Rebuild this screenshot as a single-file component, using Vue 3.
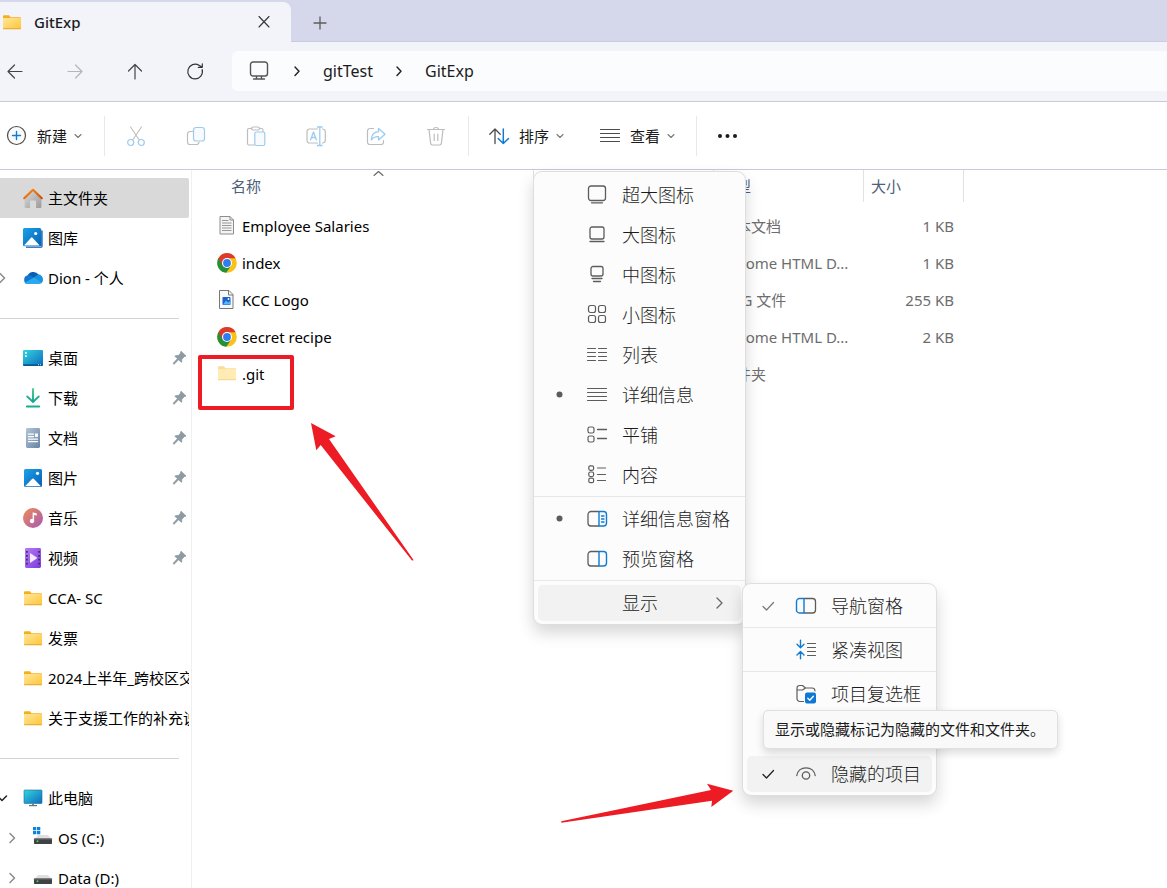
<script setup>
import { h } from 'vue'

const G = '#5c5c5c'
const B = '#0f7bd3'
const line = (d, c = G, w = 1.3) =>
  `<path d="${d}" fill="none" stroke="${c}" stroke-width="${w}" stroke-linecap="round" stroke-linejoin="round"/>`

const chrome = `<circle cx="10" cy="10" r="9.8" fill="#fbc116"/>
  <path d="M10 10 L1.5 5.1 A9.8 9.8 0 0 0 9.2 19.8 L14.2 12.5Z" fill="#23913c"/>
  <path d="M10 10 L5.6 12.4 L1.4 5.2 A9.8 9.8 0 0 1 18.6 5.2 H10Z" fill="#dc3a2b"/>
  <circle cx="10" cy="10" r="5" fill="#fff"/><circle cx="10" cy="10" r="3.9" fill="#2f7df0"/>`
const drive = `<path d="M5 7h10l3.500 4h-17z" fill="#dedfe1"/><rect x="1" y="10.500" width="18" height="5.500" rx="0.800" fill="#3f4143"/>
  <rect x="1" y="10.500" width="18" height="1" fill="#6c6e70"/><circle cx="4.500" cy="13.200" r="0.900" fill="#4be05b"/>`
const page = `M3.500 1h9.500l4 4v14h-13.500z`

const icons = {
  folder: `<path d="M1 4.200a1 1 0 0 1 1-1h5l1.500 2H18a1 1 0 0 1 1 1v3H1z" fill="#f3b01c"/><rect x="1" y="6" width="18" height="11" rx="0.800" fill="url(#g-folder)"/><rect x="1" y="16.200" width="18" height="1" rx="0.500" fill="#e5a52c"/>`,
  folderPale: `<path d="M1 3.200a1 1 0 0 1 1-1h5l1.500 2H18a1 1 0 0 1 1 1v3H1z" fill="#f9dc95"/><rect x="1" y="5" width="18" height="11" rx="0.800" fill="#ffebb3"/><rect x="1" y="15.200" width="18" height="1" fill="#f2d595"/>`,
  home: `<path d="M3 9.500 10 3l7 6.500V19a1 1 0 0 1-1 1h-3.500v-6.500a1 1 0 0 0-1-1h-3a1 1 0 0 0-1 1V20H4a1 1 0 0 1-1-1z" transform="translate(-2 0) scale(1.200 1)" fill="url(#g-home)"/><path d="M1.200 10.200 10 1.800l8.800 8.400" fill="none" stroke="url(#g-roof)" stroke-width="2.200" stroke-linecap="round" stroke-linejoin="round"/>`,
  gallery: `<path d="M18 2.500h1.800V18a2 2 0 0 1-2 2H3v-1.500h15z" fill="#3f7fbf"/><rect x="0" y="0" width="18.200" height="18.200" rx="1.500" fill="url(#g-blue)"/><path d="m1 17.500 7-7.700a1 1 0 0 1 1.500 0l7.200 7.700z" fill="#fff"/><circle cx="12.700" cy="5.500" r="1.600" fill="#fff"/>`,
  cloud: `<path d="M4.500 8.500a6 5.500 0 0 1 11-2L11 12z" fill="#0a5fb4"/><path d="M4.500 16A4.500 4.500 0 0 1 5 7.200c2.800-.2 4 1.300 9.500 5.300L7 16z" fill="#0f78d4"/><path d="M9.500 10.500 15.300 6.300A5 5 0 0 1 20 11.500c0 2-.6 3-1.700 3.700z" fill="#1793e0"/><path d="M1.500 14.800 11.200 9.600 18.800 14.800A4 4 0 0 1 16 16H4.500a4 4 0 0 1-3-1.200z" fill="#2ba9ec"/>`,
  desktop: `<rect x="0" y="2" width="20" height="15.500" rx="1" fill="url(#g-desk)"/><path d="M2 4h1.800v1.800H2zM2 7.200h1.800V9H2z" fill="#e9ffff"/><path d="M0 16.300h20v.7a1 1 0 0 1-1 1H1a1 1 0 0 1-1-1z" fill="#075a91"/><path d="M15 16.700h1M17 16.700h1" stroke="#fff" stroke-width=".8"/>`,
  download: `<path d="M10 1v12.500M4.200 8.500 10 14l5.800-5.500" fill="none" stroke="url(#g-green)" stroke-width="1.900" stroke-linecap="round"/><rect x="3" y="17.500" width="14" height="1.900" rx=".6" fill="#15b08b"/>`,
  doc: `<rect x="3" y="0" width="14" height="20" rx="1.400" fill="url(#g-doc)"/><path d="M5 6.200h6M5 8.700h6M5 11.200h10M5 13.700h10" stroke="#fff" stroke-width="1.200"/><rect x="12" y="5.500" width="3" height="3.400" fill="#fff"/>`,
  pic: `<rect x="1" y="1" width="18" height="18" rx="1.500" fill="url(#g-blue)"/><path d="m2 18.300 7.300-7.500a1 1 0 0 1 1.400 0l7.300 7.500z" fill="#fff"/><circle cx="14.500" cy="5.300" r="1.600" fill="#fff"/>`,
  music: `<circle cx="10" cy="10" r="10" fill="url(#g-music)"/><path d="M9.600 4.500h1l3.200 1v2l-2.700-.6v6.500H9.600z" fill="#fff"/><circle cx="9" cy="13" r="2.200" fill="#fff"/>`,
  video: `<rect x="2" y="0" width="16" height="20" rx="1.400" fill="url(#g-video)"/><path d="M7 5.800v8.400a.5.500 0 0 0 .8.400l6-4.200a.5.500 0 0 0 0-.8l-6-4.200a.5.500 0 0 0-.8.400z" fill="#f3eaff"/><path d="M3.900 3v15M16.100 3v15" stroke="#412a63" stroke-width="1.700" stroke-dasharray="1.800 2.100"/>`,
  pc: `<rect x="1" y="2" width="18" height="13.500" rx=".8" fill="url(#g-desk)" stroke="#1b6d9c" stroke-width=".6"/><path d="M9 15.800h2v1.700H9z" fill="#7a8791"/><rect x="6" y="17" width="8" height="1.200" fill="#66757f"/>`,
  osdrive: `${drive}<path d="M0-1h3.300v3.300H0zM4-1h3.300v3.300H4zM0 3h3.300v3.300H0zM4 3h3.300v3.300H4z" fill="#0a84d8"/>`,
  drive,
  pin: `<path d="m12.200 2.500 5.500 5.300-2 .7-2.600 3-.3 3.300L9.500 12l-4.800 4.800-1-.2.300-1.200 4.300-4.600-3-3 3.800-.5 2.700-2.600z" fill="#8f9ba3" stroke="#8f9ba3" stroke-linejoin="round"/>`,
  chromeIcon: chrome,
  textFile: `<path d="M3 .5h10L16.500 4v14H3z" fill="#f4f4f4" stroke="#8d8d8d"/><path d="M13 .5V4h3.500" fill="none" stroke="#8d8d8d"/><path d="M5 4.500h6.500M5 7h9.500M5 9.500h9.500M5 12h9.500M5 14.500h9.500" stroke="#8d8d8d" stroke-width=".9"/>`,
  imgFile: `<path d="${page}" transform="translate(-1 -.5)" fill="#f9f9f9" stroke="#777"/><path d="M11.500 .5v4.500h4.500" fill="none" stroke="#777"/><rect x="5.500" y="7" width="8" height="8" rx=".8" fill="#1b62cf"/><path d="m6 14.500 3-4 2 2 2.500-1.500v3.500z" fill="#58b8fb"/><circle cx="11.500" cy="9" r=".9" fill="#fff"/>`,
  close: line('M5 4.500 15 15M15 4.500 5 15', '#333', 1.1),
  plus: line('M4 10h12M10 4v12', '#5c5c5c', 1.3),
  back: line('M17 10.500H3M9.500 4 3 10.500 9.500 17', '#444', 1.2),
  forward: line('M3 10.500h14M10.500 4 17 10.500 10.500 17', '#b4b4ba', 1.2),
  up: line('M10 18V3.500M3.500 10 10 3.500 16.500 10', '#444', 1.2),
  refresh: line('M17.200 8.700A7.300 7.300 0 1 1 14 4.300L17.300 6.300M17.300 2.800v3.500h-4', '#333', 1.2),
  monitor: line('M4 1h12a2.500 2.500 0 0 1 2.500 2.500v9a2.500 2.500 0 0 1-2.500 2.500H4A2.500 2.500 0 0 1 1.500 12.500v-9A2.500 2.500 0 0 1 4 1zM4.500 18h11M7.500 15.300v2.500M12.500 15.300v2.500', '#555', 1.4),
  crumb: line('M8 6 12 10.300 8 14.600', '#222', 1.4),
  down: line('M7 8.500 10 11.500l3-3', '#777', 1.1),
  create: `<circle cx="9.500" cy="9.500" r="9" fill="#fafafa" stroke="#4c4c4c" stroke-width="1.200"/>` + line('M5.500 9.500h8M9.500 5.500v8', B, 1.400),
  cut: line('M4.500 1 13.300 14M15.500 1 6.700 14', '#bdbdbd', 1.1) + `<circle cx="4.700" cy="16.500" r="3" fill="none" stroke="#9ccbf0" stroke-width="1.200"/><circle cx="15.300" cy="16.500" r="3" fill="none" stroke="#9ccbf0" stroke-width="1.200"/>`,
  copy: line('M7 5.500H4A2.500 2.500 0 0 0 1.500 8v8A2.500 2.500 0 0 0 4 18.500h6.500A2.500 2.500 0 0 0 13 16', '#bdbdbd', 1.2) + `<rect x="7.500" y="1.500" width="11" height="13.500" rx="2.500" fill="#f8fbfe" stroke="#9ccbf0" stroke-width="1.200"/>`,
  paste: line('M6 2.500H3A1.500 1.500 0 0 0 1.500 4v13.500A1.500 1.500 0 0 0 3 19h5M14 2.500h1.500A1.500 1.500 0 0 1 17 4v1.500M7 1h5a1.500 1.500 0 0 1 0 3H7a1.500 1.500 0 0 1 0-3z', '#bdbdbd', 1.2) + `<rect x="8.800" y="6" width="10" height="13.500" rx="1.500" fill="#f8fbfe" stroke="#9ccbf0" stroke-width="1.200"/>`,
  rename: line('M11.500 3H3.500A2.500 2.500 0 0 0 1 5.500v9A2.500 2.500 0 0 0 3.500 17h8M16.500 3A2.800 2.800 0 0 1 19.300 6v8a2.800 2.800 0 0 1-2.800 3', '#bdbdbd', 1.2) + line('M4.500 14 7.500 6l3 8M5.500 11.500h4M13.800 1v18.500M11.500 1h4.600M11.500 19.500h4.600', '#9ccbf0', 1.3),
  share: line('M7.500 2.500H4A2.500 2.500 0 0 0 1.500 5v11A2.500 2.500 0 0 0 4 18.500h11A2.500 2.500 0 0 0 17.500 16v-1.500', '#bdbdbd', 1.2) + line('M12.500 2.500 19 8.200l-6.500 5.700v-3.200c-3.500-.2-5.500.8-7.200 3.300.2-5 3-8 7.200-8.300z', '#9ccbf0', 1.3),
  trash: line('M1.500 3.500h17M7.500 3.500a2.500 2 0 0 1 5 0M3 3.500l1.600 13.600A2 2 0 0 0 6.600 19h6.800a2 2 0 0 0 2-1.900L17 3.500M8.200 8v6.500M11.800 8v6.500', '#bdbdbd', 1.2),
  sort: line('M6 17.500V3M.8 8.200 6 3l5.200 5.200', '#4c4c4c', 1.3) + line('M14.300 3v14.500M9.200 12.500l5.100 5 5.200-5', B, 1.5),
  lines: line('M.5 3.500h19M.5 7.500h19M.5 11.500h19M.5 15.500h19', '#4c4c4c', 1.2),
  more: `<circle cx="3" cy="10" r="2" fill="#1c1c1c"/><circle cx="10.500" cy="10" r="2" fill="#1c1c1c"/><circle cx="18" cy="10" r="2" fill="#1c1c1c"/>`,
  xl: `<rect x="1.500" y="1" width="17" height="14.500" rx="2.500" fill="none" stroke="${G}" stroke-width="1.300"/>` + line('M4.500 17.800h11'),
  lg: `<rect x="3" y="2" width="14" height="12" rx="2" fill="none" stroke="${G}" stroke-width="1.300"/>` + line('M3 16.500h14'),
  md: `<rect x="4" y="1.500" width="12" height="9.500" rx="2" fill="none" stroke="${G}" stroke-width="1.300"/>` + line('M5 13.500h10M6.500 16.500h7'),
  sm: [[1.5, .5], [11.5, .5], [1.5, 10.500], [11.5, 10.500]].map(([x, y]) => `<rect x="${x}" y="${y}" width="7" height="7" rx="2" fill="none" stroke="${G}" stroke-width="1.200"/>`).join(''),
  list: line('M.5 3.500h8M11.500 3.500h8M.5 7.500h8M11.500 7.500h8M.5 11.500h8M11.500 11.500h8M.5 15.500h8M11.500 15.500h8', G, 1.200),
  details: line('M.5 3.500h19M.5 7.500h19M.5 11.500h19M.5 15.500h19', G, 1.200),
  tiles: `<rect x="1" y="2" width="6" height="6" rx="1.800" fill="none" stroke="${G}" stroke-width="1.200"/><rect x="1" y="11" width="6" height="6" rx="1.800" fill="none" stroke="${G}" stroke-width="1.200"/>` + line('M10.500 4.500h9M10.500 13.500h9'),
  content: [.8, 7, 13.200].map(y => `<rect x="1.800" y="${y}" width="4.800" height="4.500" rx="1.500" fill="none" stroke="${G}" stroke-width="1.200"/>`).join('') + line('M10.500 3h8M10.500 9.500h8M10.500 15.500h8', G, 1.200),
  detailPane: line('M11.500 2.500H4A3 3 0 0 0 1 5.500v8.500a3 3 0 0 0 3 3h7.500') + line('M12 2.500h4.500a3 3 0 0 1 3 3v8.500a3 3 0 0 1-3 3H12zM14.500 7h2.500M14.500 10h2.500M14.500 13h2.500', B, 1.400),
  preview: line('M11.500 2.500H4A3 3 0 0 0 1 5.500v8.500a3 3 0 0 0 3 3h7.500') + line('M12 2.500h4.500a3 3 0 0 1 3 3v8.500a3 3 0 0 1-3 3H12z', B, 1.400),
  nav: line('M8.500 2.500h8a3 3 0 0 1 3 3v8.500a3 3 0 0 1-3 3h-8') + line('M8 2.500H3.500a3 3 0 0 0-3 3v8.500a3 3 0 0 0 3 3H8z', B, 1.400),
  compact: line('M4.500.2v7M1 4.200 4.500 7.700 8 4.200M4.500 18.700v-7M1 15 4.500 11.500 8 15', B, 1.400) + line('M11.500 3.500h8M11.500 7.500h8M11.500 11.500h8M11.500 15.500h8', G, 1.200),
  checkFolder: line('M7.500 17.500H4A3 3 0 0 1 1 14.500V4A2.500 2.500 0 0 1 3.500 1.500h3L9.500 4H16a3 3 0 0 1 3 2.800M1 6h5.500L9.500 4', G, 1.200) + `<rect x="9" y="8.500" width="11" height="11" rx="2" fill="#0f78d4"/>` + line('m11.800 14.200 2 2 3.600-4', '#fff', 1.300),
  eye: line('M.8 11.500C1.500 7 5 3.800 10 3.800s8.500 3.200 9.200 7.700') + `<circle cx="10" cy="11.500" r="3.700" fill="none" stroke="${G}" stroke-width="1.300"/>`,
  check: line('M5 10.500 8.500 14 15.500 6.500', '#777', 1.200),
  checkDark: line('M5 10.500 8.500 14 15.500 6.500', '#222', 1.300),
  dot: `<circle cx="10.500" cy="9.500" r="3" fill="#5c5c5c"/>`,
  right: line('M8 5 13 10l-5 5', '#666', 1.300),
  treeRight: line('M8 5.500 12.500 10 8 14.500', '#8a8a8a', 1.500),
  treeDown: line('M5.500 8 10 12.500 14.500 8', '#222', 1.500),
  sortUp: line('M6 11.500 10.500 7.500 15 11.500', '#666', 1.100)
}

const Icon = p => h('svg', { class: 'icon', viewBox: '0 0 20 20', width: p.size || 20, height: p.size || 20, 'aria-hidden': 'true', innerHTML: icons[p.name] })
Icon.props = ['name', 'size']

const navGroups = [
  [
    { icon: 'home', label: '主文件夹', active: true },
    { icon: 'gallery', label: '图库' },
    { icon: 'cloud', label: 'Dion - 个人', tree: 'treeRight' }
  ],
  [
    { icon: 'desktop', label: '桌面', pin: true },
    { icon: 'download', label: '下载', pin: true },
    { icon: 'doc', label: '文档', pin: true },
    { icon: 'pic', label: '图片', pin: true },
    { icon: 'music', label: '音乐', pin: true },
    { icon: 'video', label: '视频', pin: true },
    { icon: 'folder', label: 'CCA- SC' },
    { icon: 'folder', label: '发票' },
    { icon: 'folder', label: '2024上半年_跨校区交' },
    { icon: 'folder', label: '关于支援工作的补充说' }
  ],
  [
    { icon: 'pc', label: '此电脑', tree: 'treeDown' },
    { icon: 'osdrive', label: 'OS (C:)', tree: 'treeRight', child: true },
    { icon: 'drive', label: 'Data (D:)', tree: 'treeRight', child: true }
  ]
]

const files = [
  { icon: 'textFile', name: 'Employee Salaries', type: '文本文档', size: '1 KB' },
  { icon: 'chromeIcon', name: 'index', type: 'Chrome HTML D...', size: '1 KB' },
  { icon: 'imgFile', name: 'KCC Logo', type: 'PNG 文件', size: '255 KB' },
  { icon: 'chromeIcon', name: 'secret recipe', type: 'Chrome HTML D...', size: '2 KB' },
  { icon: 'folderPale', name: '.git', type: '文件夹', size: '' }
]

const tools = [
  ['cut', '剪切'], ['copy', '复制'], ['paste', '粘贴'], ['rename', '重命名'], ['share', '共享'], ['trash', '删除']
]

const viewMenu = [
  [
    { icon: 'xl', label: '超大图标' },
    { icon: 'lg', label: '大图标' },
    { icon: 'md', label: '中图标' },
    { icon: 'sm', label: '小图标' },
    { icon: 'list', label: '列表' },
    { icon: 'details', label: '详细信息', mark: 'dot' },
    { icon: 'tiles', label: '平铺' },
    { icon: 'content', label: '内容' }
  ],
  [
    { icon: 'detailPane', label: '详细信息窗格', mark: 'dot' },
    { icon: 'preview', label: '预览窗格' }
  ],
  [{ label: '显示', more: true, active: true }]
]

const showMenu = [
  [{ icon: 'nav', label: '导航窗格', mark: 'check' }],
  [{ icon: 'compact', label: '紧凑视图' }],
  [
    { icon: 'checkFolder', label: '项目复选框' },
    { icon: 'eye', label: '隐藏的项目', mark: 'checkDark', active: true, last: true }
  ]
]
</script>

<template>
  <div class="window">
    <svg class="defs" width="0" height="0" aria-hidden="true">
      <defs>
        <linearGradient id="g-folder" x1="0" y1="0" x2="1" y2="1"><stop offset="0" stop-color="#ffe69b" /><stop offset="1" stop-color="#ffc637" /></linearGradient>
        <linearGradient id="g-home" x1="0" y1="0" x2="1" y2="1"><stop offset="0" stop-color="#d9d9d9" /><stop offset="1" stop-color="#9b9b9b" /></linearGradient>
        <linearGradient id="g-roof" x1="0" y1="0" x2="1" y2="1"><stop offset="0" stop-color="#f5921b" /><stop offset="1" stop-color="#d8480d" /></linearGradient>
        <linearGradient id="g-blue" x1="0" y1="0" x2="1" y2="1"><stop offset="0" stop-color="#1da1e8" /><stop offset="1" stop-color="#0560b6" /></linearGradient>
        <linearGradient id="g-desk" x1="0" y1="0" x2="1" y2="1"><stop offset="0" stop-color="#35d5dd" /><stop offset="1" stop-color="#0c6cc0" /></linearGradient>
        <linearGradient id="g-green" gradientUnits="userSpaceOnUse" x1="0" y1="1" x2="0" y2="15"><stop offset="0" stop-color="#3ccd84" /><stop offset="1" stop-color="#0fa296" /></linearGradient>
        <linearGradient id="g-doc" x1="0" y1="0" x2="1" y2="1"><stop offset="0" stop-color="#b4c5d7" /><stop offset="1" stop-color="#6584a5" /></linearGradient>
        <linearGradient id="g-music" x1="0" y1="0" x2="1" y2="1"><stop offset="0" stop-color="#f08c56" /><stop offset="1" stop-color="#a758b4" /></linearGradient>
        <linearGradient id="g-video" x1="0" y1="0" x2="1" y2="1"><stop offset="0" stop-color="#b57bf5" /><stop offset="1" stop-color="#7a3bdc" /></linearGradient>
      </defs>
    </svg>

    <header class="tabs">
      <div class="tab">
        <Icon name="folder" />
        <span class="tab-title">GitExp</span>
        <button aria-label="关闭标签页"><Icon name="close" /></button>
      </div>
      <button class="new-tab" aria-label="新标签页"><Icon name="plus" /></button>
    </header>

    <nav class="address-row">
      <button aria-label="后退"><Icon name="back" /></button>
      <button aria-label="前进"><Icon name="forward" /></button>
      <button aria-label="向上"><Icon name="up" /></button>
      <button aria-label="刷新"><Icon name="refresh" /></button>
      <div class="address">
        <Icon name="monitor" />
        <Icon name="crumb" class="crumb-sep" />
        <a href="#">gitTest</a>
        <Icon name="crumb" />
        <a href="#">GitExp</a>
      </div>
    </nav>

    <div class="toolbar">
      <button class="labelled create"><Icon name="create" />新建<Icon name="down" class="caret" /></button>
      <i class="sep"></i>
      <div class="tools">
        <button v-for="[icon, label] in tools" :key="icon" :aria-label="label" disabled><Icon :name="icon" /></button>
      </div>
      <i class="sep"></i>
      <div class="pair">
        <button class="labelled"><Icon name="sort" />排序<Icon name="down" class="caret" /></button>
        <button class="labelled"><Icon name="lines" />查看<Icon name="down" class="caret" /></button>
      </div>
      <i class="sep"></i>
      <button aria-label="更多"><Icon name="more" /></button>
    </div>

    <div class="body">
      <aside class="sidebar">
        <ul v-for="(group, i) in navGroups" :key="i">
          <li v-for="item in group" :key="item.label">
            <a href="#" :class="{ active: item.active, child: item.child }">
              <span class="tree"><Icon v-if="item.tree" :name="item.tree" /></span>
              <Icon :name="item.icon" />
              <span class="nav-label">{{ item.label }}</span>
              <Icon v-if="item.pin" name="pin" size="18" class="pin" />
            </a>
          </li>
        </ul>
      </aside>

      <main class="files">
        <table>
          <colgroup><col class="c-name" /><col class="c-date" /><col class="c-type" /><col class="c-size" /></colgroup>
          <thead>
            <tr>
              <th class="h-name">名称<Icon name="sortUp" class="sort-mark" /></th>
              <th></th>
              <th>类型</th>
              <th>大小</th>
            </tr>
          </thead>
          <tbody>
            <tr v-for="f in files" :key="f.name">
              <td><span class="file"><Icon :name="f.icon" />{{ f.name }}</span></td>
              <td></td>
              <td class="meta">{{ f.type }}</td>
              <td class="meta size">{{ f.size }}</td>
            </tr>
          </tbody>
        </table>
      </main>
    </div>

    <div class="menu view-menu" role="menu">
      <div v-for="(group, i) in viewMenu" :key="i" class="group">
        <button v-for="m in group" :key="m.label" role="menuitem" :class="{ active: m.active }">
          <span class="mark"><Icon v-if="m.mark" :name="m.mark" /></span>
          <span class="glyph"><Icon v-if="m.icon" :name="m.icon" /></span>
          <span>{{ m.label }}</span>
          <Icon v-if="m.more" name="right" class="more" />
        </button>
      </div>
    </div>

    <div class="menu show-menu" role="menu">
      <div v-for="(group, i) in showMenu" :key="i" class="group">
        <button v-for="m in group" :key="m.label" role="menuitem" :class="{ active: m.active, last: m.last }">
          <span class="mark"><Icon v-if="m.mark" :name="m.mark" /></span>
          <span class="glyph"><Icon :name="m.icon" /></span>
          <span>{{ m.label }}</span>
        </button>
      </div>
    </div>

    <div class="tooltip" role="tooltip">显示或隐藏标记为隐藏的文件和文件夹。</div>

    <div class="highlight"></div>
    <svg class="arrow arrow-up" width="104" height="139" viewBox="0 0 104 139" aria-hidden="true">
      <path d="M0 0 24.700 13.300 18 16 102.700 137.300 101 137.500 9.700 22 5.300 27.300z" fill="#ed1c24" />
    </svg>
    <svg class="arrow arrow-right" width="174" height="42" viewBox="0 0 174 42" aria-hidden="true">
      <path d="M172.300 8.700 146 1.700 150 8 .3 39.300V40.700L151 18.700l-.7 6.300z" fill="#ed1c24" />
    </svg>
  </div>
</template>

<style>
body {
  margin: 0;
}
</style>

<style scoped>
.window {
  position: relative;
  display: flex;
  flex-direction: column;
  height: 100vh;
  overflow: hidden;
  background: #fff;
  color: #1b1b1b;
  font: 15px/20px "Noto Sans", "Noto Sans CJK SC", sans-serif;
}
.defs {
  position: absolute;
}
.icon {
  display: block;
  flex: none;
  overflow: visible;
}
button {
  padding: 0;
  border: 0;
  background: none;
  color: inherit;
  font: inherit;
}
a {
  color: inherit;
  text-decoration: none;
}

.tabs {
  display: flex;
  flex: none;
  align-items: stretch;
  height: 42px;
  box-sizing: border-box;
  padding-top: 2px;
  background: #d5d8eb;
  box-shadow: inset 0 -1px #c8cce0;
}
.tab {
  display: flex;
  align-items: center;
  width: 291px;
  box-sizing: border-box;
  padding: 0 17px 0 2px;
  border-radius: 0 8px 0 0;
  background: #f3f4fa;
}
.tab-title {
  flex: 1;
  padding-left: 12px;
  font-weight: 500;
}
.new-tab {
  padding: 2px 0 0 19px;
}
.address-row {
  display: flex;
  flex: none;
  align-items: center;
  gap: 40px;
  height: 57px;
  padding: 0 0 2px 5px;
  border-bottom: 1px solid #c9c9da;
  background: #f3f4fa;
}
.address {
  display: flex;
  flex: 1;
  align-items: center;
  gap: 16px;
  height: 40px;
  margin-left: -13px;
  padding-left: 17px;
  border-radius: 6px 0 0 6px;
  background: #fbfcfe;
  font-size: 16px;
}
.crumb-sep {
  margin-left: 2px;
}
.toolbar {
  display: flex;
  flex: none;
  align-items: center;
  height: 67px;
  padding-left: 7px;
  border-bottom: 1px solid #c9c9da;
}
.labelled {
  display: flex;
  align-items: center;
  gap: 10px;
}
.create {
  margin-right: 2px;
}
.caret {
  margin: 0 -6px 0 -9px;
}
.sep {
  width: 1px;
  height: 40px;
  margin: 0 20px;
  background: #e8e8e8;
}
.tools {
  display: flex;
  gap: 40px;
  margin: 0 2px 0 1px;
}
.pair {
  display: flex;
  gap: 36px;
  margin-right: 1px;
}

.body {
  display: flex;
  flex: 1;
  min-height: 0;
}
.sidebar {
  flex: none;
  width: 192px;
  box-sizing: border-box;
  padding: 8px 2px 0 0;
  border-right: 1px solid #f0f0f0;
  color: #000;
}
ul {
  margin: 0;
  padding: 0;
  list-style: none;
}
ul + ul::before {
  content: "";
  display: block;
  height: 1px;
  margin: 20px 10px 19px 0;
  background: #d4d4d4;
}
.sidebar a {
  display: flex;
  align-items: center;
  height: 40px;
  overflow: hidden;
  border-radius: 0 2px 2px 0;
}
.sidebar a.active {
  background: #d9d9d9;
}
.tree {
  display: flex;
  justify-content: flex-end;
  width: 12px;
  margin-right: 11px;
}
.child .tree {
  width: 22px;
}
.nav-label {
  flex: 1;
  min-width: 0;
  overflow: hidden;
  padding-left: 5px;
  white-space: nowrap;
}
.pin {
  margin-right: 1px;
}

.files {
  flex: 1;
  min-width: 0;
}
table {
  width: 772px;
  table-layout: fixed;
  border-collapse: separate;
  border-spacing: 0;
}
.c-name {
  width: 342px;
}
.c-date {
  width: 180px;
}
.c-type {
  width: 150px;
}
.c-size {
  width: 100px;
}
th {
  height: 32px;
  box-sizing: border-box;
  padding: 0 0 0 7px;
  border-right: 1px solid #e2e2e2;
  color: #4c607a;
  font-weight: 400;
  text-align: left;
}
.h-name {
  position: relative;
  padding-left: 39px;
}
.sort-mark {
  position: absolute;
  top: -6px;
  left: 176px;
}
tbody::before {
  content: "";
  display: block;
  height: 5px;
}
td {
  height: 37px;
  padding: 0 0 0 7px;
  color: #000;
  white-space: nowrap;
}
td:first-child {
  padding-left: 25px;
}
.file {
  display: flex;
  align-items: center;
  gap: 5px;
}
.meta {
  color: #6d6d6d;
}
.size {
  padding-right: 10px;
  text-align: right;
}

.menu {
  position: absolute;
  box-sizing: border-box;
  border: 1px solid #dedede;
  border-radius: 9px;
  background: #fcfcfc;
  box-shadow: 0 8px 16px rgba(0, 0, 0, 0.16);
  font-size: 18px;
  font-weight: 300;
}
.view-menu {
  top: 171px;
  left: 533px;
  width: 213px;
  padding: 3px 0 1px;
}
.show-menu {
  top: 583px;
  left: 742px;
  width: 195px;
  padding: 2px 0 1px;
}
.group {
  display: flex;
  flex-direction: column;
}
.group + .group::before {
  content: "";
  height: 1px;
  margin: 1px 0 2px;
  background: #e8e8e8;
}
.menu button {
  display: flex;
  align-items: center;
  height: 36px;
  margin: 2px 4px;
  border-radius: 5px;
  white-space: nowrap;
}
.menu button.last {
  margin-top: 42px;
}
.menu button.active {
  background: #f2f2f2;
}
.mark {
  width: 20px;
  margin: 0 18px 0 11px;
}
.glyph {
  width: 20px;
  margin-right: 15px;
}
.more {
  margin-left: auto;
  margin-right: 12px;
}
.tooltip {
  position: absolute;
  top: 710px;
  left: 763px;
  padding: 8px 12px 9px 11px;
  border: 1px solid #e0e0e0;
  border-radius: 5px;
  background: #f9f9f9;
  box-shadow: 0 4px 8px rgba(0, 0, 0, 0.14);
  white-space: nowrap;
}
.highlight {
  position: absolute;
  top: 355px;
  left: 198px;
  width: 96px;
  height: 55px;
  box-sizing: border-box;
  border: 4px solid #ed1c24;
  border-radius: 2px;
}
.arrow {
  position: absolute;
}
.arrow-up {
  top: 423px;
  left: 311px;
}
.arrow-right {
  top: 782px;
  left: 561px;
}
</style>
